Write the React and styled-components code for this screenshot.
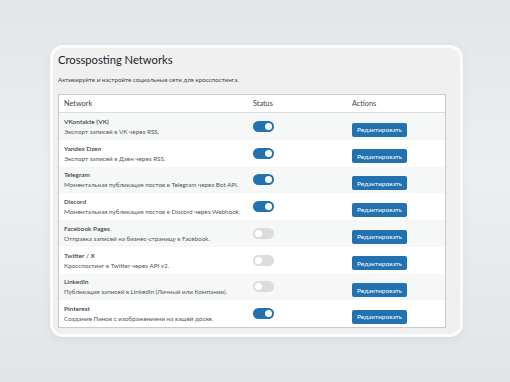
import React from 'react';
import styled, { createGlobalStyle } from 'styled-components';

const GlobalStyle = createGlobalStyle`
    html, body {
        margin: 0;
        padding: 0;
        width: 510px;
        height: 382px;
        overflow: hidden;
        background: linear-gradient(180deg, #e3e6e9 0%, #eceef0 45%, #e2e5e8 100%);
        font-family: Lato, "Open Sans", sans-serif;
    }
`;

const Page = styled.div`
    padding: 45px 0 0 50px;
`;

const Panel = styled.div`
    width: 402px;
    height: 286px;
    background: #f0f0f1;
    border: 3px solid #fbfbfc;
    border-radius: 13px;
    box-shadow: 0 2px 10px rgba(0, 0, 0, 0.06);
    padding: 0 0 0 5px;
    box-sizing: content-box;
`;

const Title = styled.h1`
    margin: 0;
    padding-top: 5px;
    font-size: 11.2px;
    font-weight: 400;
    color: #1d2327;
    line-height: 14px;
`;

const Subtitle = styled.p`
    margin: 7.5px 0 0;
    font-size: 6.2px;
    line-height: 9px;
    color: #3c434a;
`;

const Table = styled.div`
    margin-top: 10.5px;
    width: 388px;
    border: 1px solid #c9cacc;
    background: #fff;
    box-sizing: border-box;
`;

const Row = styled.div`
    display: grid;
    grid-template-columns: 189px 99px 1fr;
    align-items: center;
    height: ${p => (p.$head ? '17px' : '26.75px')};
    padding-left: 5px;
    background: ${p => (p.$alt ? '#f6f7f7' : '#fff')};
    border-bottom: ${p => (p.$head ? '1px solid #dcdcde' : 'none')};
`;

const HeadCell = styled.div`
    font-size: 7.3px;
    color: #3c434a;
`;

const Name = styled.div`
    font-size: 6.5px;
    font-weight: 600;
    color: #3c434a;
    line-height: 9px;
`;

const Desc = styled.div`
    font-size: 6.3px;
    color: #50575e;
    line-height: 9px;
    margin-top: 1px;
`;

const Toggle = styled.div`
    position: relative;
    width: 21px;
    height: 11px;
    border-radius: 6px;
    background: ${p => (p.$on ? '#2271b1' : '#dcdcde')};

    &::after {
        content: '';
        position: absolute;
        top: 2px;
        left: ${p => (p.$on ? '12px' : '2px')};
        width: 7px;
        height: 7px;
        border-radius: 50%;
        background: #fff;
    }
`;

const Button = styled.button`
    width: 55px;
    height: 14px;
    padding: 0;
    border: none;
    border-radius: 2px;
    background: #2271b1;
    color: #fff;
    font-family: inherit;
    font-size: 6.5px;
    cursor: pointer;
`;

const networks = [
    { name: 'VKontakte (VK)', desc: 'Экспорт записей в VK через RSS.', on: true },
    { name: 'Yandex Dzen', desc: 'Экспорт записей в Дзен через RSS.', on: true },
    { name: 'Telegram', desc: 'Моментальная публикация постов в Telegram через Bot API.', on: true },
    { name: 'Discord', desc: 'Моментальная публикация постов в Discord через Webhook.', on: true },
    { name: 'Facebook Pages', desc: 'Отправка записей на бизнес-страницу в Facebook.', on: false },
    { name: 'Twitter / X', desc: 'Кросспостинг в Twitter через API v2.', on: false },
    { name: 'LinkedIn', desc: 'Публикация записей в LinkedIn (Личный или Компании).', on: false },
    { name: 'Pinterest', desc: 'Создание Пинов с изображениями на вашей доске.', on: true },
];

const App = () => (
    <Page>
        <GlobalStyle />
        <Panel>
            <Title>Crossposting Networks</Title>
            <Subtitle>Активируйте и настройте социальные сети для кросспостинга.</Subtitle>
            <Table>
                <Row $head>
                    <HeadCell>Network</HeadCell>
                    <HeadCell>Status</HeadCell>
                    <HeadCell>Actions</HeadCell>
                </Row>
                {networks.map((n, i) => (
                    <Row key={n.name} $alt={i % 2 === 0}>
                        <div>
                            <Name>{n.name}</Name>
                            <Desc>{n.desc}</Desc>
                        </div>
                        <Toggle $on={n.on} />
                        <div>
                            <Button>Редактировать</Button>
                        </div>
                    </Row>
                ))}
            </Table>
        </Panel>
    </Page>
);

export default App;
